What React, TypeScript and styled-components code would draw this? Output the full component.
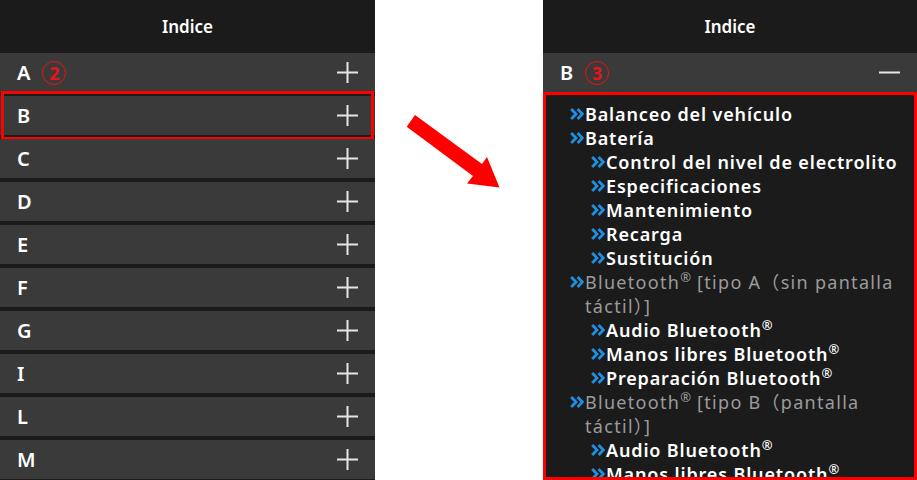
import styled, { createGlobalStyle } from 'styled-components';

const GlobalStyle = createGlobalStyle`
  body {
    margin: 0;
    background: #ffffff;
    font-family: 'Noto Sans', 'Noto Sans CJK JP', sans-serif;
  }
`;

const Page = styled.div`
  display: flex;
  width: 917px;
  height: 480px;
  overflow: hidden;
`;

const Panel = styled.div<{ $width: number }>`
  display: flex;
  flex-direction: column;
  width: ${(p) => p.$width}px;
  flex-shrink: 0;
  height: 480px;
  background: #1b1b1b;
`;

const Header = styled.div`
  display: flex;
  align-items: center;
  justify-content: center;
  height: 53px;
  flex-shrink: 0;
  color: #ffffff;
  font-size: 17px;
  font-weight: 600;
`;

const RowList = styled.div`
  display: flex;
  flex-direction: column;
  gap: 4px;
`;

const Row = styled.div<{ $marked?: boolean }>`
  position: relative;
  display: flex;
  align-items: center;
  height: 39px;
  flex-shrink: 0;
  padding: 0 17px;
  background: #3a3a3a;
  color: #ffffff;
  font-size: 20px;
  font-weight: 600;

  ${(p) =>
    p.$marked &&
    `
    &::after {
      content: '';
      position: absolute;
      top: -5px;
      bottom: -5px;
      left: 1px;
      right: 1px;
      border: 3px solid #ff0000;
    }
  `}
`;

const Letter = styled.span`
  line-height: 1;
`;

const Step = styled.span`
  display: inline-flex;
  align-items: center;
  justify-content: center;
  width: 22px;
  height: 22px;
  margin-left: 12px;
  border: 1.5px solid #e8141b;
  border-radius: 50%;
  color: #e8141b;
  font-size: 18px;
  font-weight: 700;
  line-height: 1;
`;

const Toggle = styled.svg`
  margin-left: auto;
  flex-shrink: 0;
`;

const Middle = styled.div`
  flex: 1;
  background: #ffffff;
`;

const Content = styled.div`
  flex: 1;
  min-height: 0;
  overflow: hidden;
  border: 3px solid #ff0000;
  padding: 7px 4px 0 24px;
  background: #1b1b1b;
`;

const Item = styled.div<{ $level: number; $group?: boolean }>`
  display: flex;
  align-items: flex-start;
  margin-left: ${(p) => (p.$level - 1) * 21}px;
  font-size: 18px;
  line-height: 24px;
  font-weight: ${(p) => (p.$group ? 400 : 600)};
  letter-spacing: ${(p) => (p.$group ? 1.3 : 0.85)}px;
  color: ${(p) => (p.$group ? '#9b9b9b' : '#ffffff')};
`;

const Reg = styled.span`
  position: relative;
  top: -7px;
  font-size: 13px;
  line-height: 1;
  letter-spacing: 0;
`;

const Chevron = styled.svg`
  flex-shrink: 0;
  margin-top: 6px;
  margin-right: 1px;
`;

function PlusMinus({ open }: { open?: boolean }) {
  return (
    <Toggle width="21" height="21" viewBox="0 0 21 21">
      <line x1="0" y1="10.5" x2="21" y2="10.5" stroke="#e6e6e6" strokeWidth="2" />
      {!open && <line x1="10.5" y1="0" x2="10.5" y2="21" stroke="#e6e6e6" strokeWidth="2" />}
    </Toggle>
  );
}

function Arrows() {
  return (
    <Chevron width="14" height="12" viewBox="0 0 14 12">
      <polyline points="1.2,1 6,6 1.2,11" fill="none" stroke="#1f8fe0" strokeWidth="2.8" />
      <polyline points="7.6,1 12.4,6 7.6,11" fill="none" stroke="#1f8fe0" strokeWidth="2.8" />
    </Chevron>
  );
}

const letters = ['A', 'B', 'C', 'D', 'E', 'F', 'G', 'I', 'L', 'M'];

const R = <Reg>®</Reg>;

const entries: { level: number; group?: boolean; text: React.ReactNode }[] = [
  { level: 1, text: 'Balanceo del vehículo' },
  { level: 1, text: 'Batería' },
  { level: 2, text: 'Control del nivel de electrolito' },
  { level: 2, text: 'Especificaciones' },
  { level: 2, text: 'Mantenimiento' },
  { level: 2, text: 'Recarga' },
  { level: 2, text: 'Sustitución' },
  { level: 1, group: true, text: <>Bluetooth{R} [tipo A（sin pantalla táctil）]</> },
  { level: 2, text: <>Audio Bluetooth{R}</> },
  { level: 2, text: <>Manos libres Bluetooth{R}</> },
  { level: 2, text: <>Preparación Bluetooth{R}</> },
  { level: 1, group: true, text: <>Bluetooth{R} [tipo B（pantalla táctil）]</> },
  { level: 2, text: <>Audio Bluetooth{R}</> },
  { level: 2, text: <>Manos libres Bluetooth{R}</> },
  { level: 2, text: <>Preparación Bluetooth{R}</> },
];

export default function App() {
  return (
    <Page>
      <GlobalStyle />
      <Panel $width={375}>
        <Header>Indice</Header>
        <RowList>
          {letters.map((l) => (
            <Row key={l} $marked={l === 'B'}>
              <Letter>{l}</Letter>
              {l === 'A' && <Step>2</Step>}
              <PlusMinus />
            </Row>
          ))}
        </RowList>
      </Panel>

      <Middle>
        <svg width="168" height="480" viewBox="375 0 168 480">
          <polygon
            points="406.7,126.7 415,115 482,164 487,157 499.5,187.5 467,183.5 473,176"
            fill="#ff0000"
          />
        </svg>
      </Middle>

      <Panel $width={374}>
        <Header>Indice</Header>
        <Row>
          <Letter>B</Letter>
          <Step>3</Step>
          <PlusMinus open />
        </Row>
        <Content>
          {entries.map((e, i) => (
            <Item key={i} $level={e.level} $group={e.group}>
              <Arrows />
              <span>{e.text}</span>
            </Item>
          ))}
        </Content>
      </Panel>
    </Page>
  );
}
